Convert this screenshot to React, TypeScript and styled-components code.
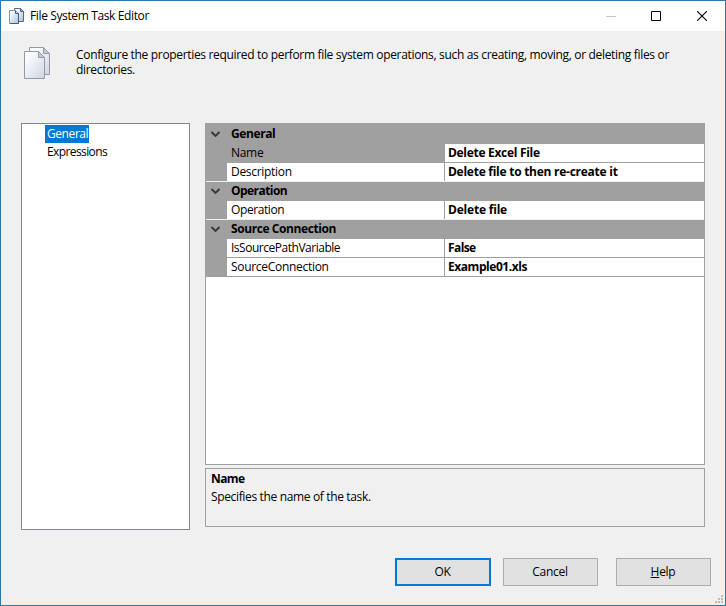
import React from "react";
import styled, { createGlobalStyle, css } from "styled-components";

const GlobalStyle = createGlobalStyle`
  * { box-sizing: border-box; }
  body { margin: 0; background: #f0f0f0; }
`;

const Window = styled.main`
  width: 726px;
  height: 606px;
  display: flex;
  flex-direction: column;
  position: relative;
  border: 1px solid #2878b4;
  background: #f0f0f0;
  color: #000;
  font: 12px/16px "Open Sans", "Noto Sans", sans-serif;
  cursor: default;
`;

const Text = styled.span<{ $spacing?: number }>`
  white-space: pre;
  letter-spacing: ${(p) => p.$spacing ?? -0.3}px;
`;

const TitleBar = styled.header`
  height: 30px;
  flex: none;
  display: flex;
  align-items: center;
  padding-left: 7px;
  background: #fff;
`;

const Title = styled.h1`
  flex: 1;
  margin: 0 0 0 5px;
  font-size: 12px;
  font-weight: 400;
  line-height: 16px;
`;

const CaptionButton = styled.button<{ $width: number }>`
  width: ${(p) => p.$width}px;
  height: 30px;
  padding: 0;
  border: 0;
  background: transparent;
  display: grid;
  place-items: center;
  svg { display: block; }
`;

const Intro = styled.section`
  height: 92px;
  flex: none;
  display: flex;
  padding: 15px 22px 0;
`;

const IntroText = styled.p`
  width: 610px;
  margin: 1px 0 0 25px;
  line-height: 15px;
  letter-spacing: -0.325px;
`;

const Body = styled.div`
  display: flex;
  gap: 15px;
  height: 407px;
  padding: 0 20px;
`;

const NavPanel = styled.nav`
  width: 169px;
  border: 1px solid #828790;
  background: #fff;
  padding: 1px 0 0 23px;
  display: flex;
  flex-direction: column;
  align-items: flex-start;
`;

const NavItem = styled.a<{ $selected?: boolean }>`
  height: 18px;
  line-height: 17px;
  padding: 0 1px 0 2px;
  color: ${(p) => (p.$selected ? "#fff" : "#000")};
  background: ${(p) => (p.$selected ? "#0078d7" : "transparent")};
`;

const Properties = styled.section`
  width: 500px;
  display: flex;
  flex-direction: column;
  gap: 3px;
`;

const Grid = styled.div`
  height: 342px;
  border: 1px solid #a0a0a0;
  background: #fff;
`;

const GroupHeader = styled.div<{ $first?: boolean }>`
  display: flex;
  height: ${(p) => (p.$first ? 20 : 19)}px;
  padding-top: ${(p) => (p.$first ? 1 : 0)}px;
  background: #a0a0a0;
  font-weight: 700;
  line-height: 18px;
`;

const Gutter = styled.div`
  width: 21px;
  flex: none;
  padding: 4px 0 0 4px;
  background: #a0a0a0;
  svg { display: block; }
`;

const PropertyRow = styled.div<{ $line: string }>`
  display: flex;
  height: 19px;
  line-height: 18px;
  border-bottom: 1px solid ${(p) => p.$line};
`;

const PropertyName = styled.div<{ $selected?: boolean }>`
  width: 218px;
  flex: none;
  padding-left: 4px;
  border-right: 1px solid #a0a0a0;
  ${(p) => p.$selected && css`background: #a0a0a0;`}
`;

const PropertyValue = styled.div`
  padding-left: 3px;
  font-weight: 700;
`;

const GroupTitle = styled.div`
  padding-left: 4px;
`;

const HelpPane = styled.div`
  height: 59px;
  border: 1px solid #a0a0a0;
  padding: 2px 5px;
  display: flex;
  flex-direction: column;
  gap: 2px;
`;

const HelpTitle = styled.div`
  font-weight: 700;
`;

const Actions = styled.footer`
  display: flex;
  margin-top: 28px;
  padding-left: 394px;
`;

const Button = styled.button<{ $primary?: boolean; $gap: number }>`
  width: ${(p) => (p.$primary ? 96 : 95)}px;
  height: 28px;
  margin: 0 ${(p) => p.$gap}px 0 0;
  padding: 0 1px 0 0;
  font: inherit;
  color: #000;
  background: #e1e1e1;
  border: ${(p) => (p.$primary ? "2px solid #0078d7" : "1px solid #adadad")};
`;

const Grip = styled.svg`
  position: absolute;
  right: 2px;
  bottom: 2px;
`;

const DocumentsSvg = styled.svg`
  display: block;
  flex: none;
`;

const SmallDocuments = () => (
  <DocumentsSvg width="17" height="17" viewBox="0 0 17 17">
    <defs>
      <linearGradient id="paperSmall" x1="0" y1="0" x2="1" y2="1">
        <stop offset="0.2" stopColor="#f8fafd" />
        <stop offset="1" stopColor="#a9bfdc" />
      </linearGradient>
    </defs>
    <g fill="url(#paperSmall)">
      <path d="M6.500.500H12.500L15.500 3.500V13.500H6.500Z" stroke="#526b88" />
      <path d="M12.500.500V3.500H15.500Z" fill="#8ba0bd" stroke="#526b88" />
      <path d="M1.500 2.500H7.500L10.500 5.500V15.500H1.500Z" stroke="#8496ad" />
      <path d="M7.500 2.500V5.500H10.500V15.500H2" fill="none" stroke="#435c7c" />
    </g>
  </DocumentsSvg>
);

const LargeDocuments = () => (
  <DocumentsSvg width="28" height="34" viewBox="0 0 28 34">
    <defs>
      <linearGradient id="paper" x1="0" y1="0" x2="1" y2="1">
        <stop offset="0.2" stopColor="#fafbfd" />
        <stop offset="1" stopColor="#cdd5e2" />
      </linearGradient>
    </defs>
    <g fill="url(#paper)" stroke="#9299a9">
      <path d="M6.500 1.500H20.500L26.500 7.500V28.500H6.500Z" />
      <path d="M20.500 1.500V7.500H26.500Z" fill="#c4c9d3" />
      <path d="M1.500 5.500H15.500L21.500 11.500V32.500H1.500Z" />
      <path d="M15.500 5.500V11.500H21.500Z" fill="#c4c9d3" />
    </g>
  </DocumentsSvg>
);

const Chevron = () => (
  <svg width="11" height="10" viewBox="0 0 11 10" fill="none" stroke="#383838" strokeWidth="1.9">
    <path d="M1.500 3L5.500 7L9.500 3" />
  </svg>
);

type Item = { name: string; value: string; ns?: number; vs?: number; selected?: boolean };
const groups: { title: string; ts?: number; items: Item[] }[] = [
  {
    title: "General",
    ts: -0.4,
    items: [
      { name: "Name", value: "Delete Excel File", selected: true },
      { name: "Description", value: "Delete file to then re-create it", vs: -0.26 },
    ],
  },
  {
    title: "Operation",
    ts: -0.55,
    items: [{ name: "Operation", value: "Delete file", ns: -0.4, vs: -0.2 }],
  },
  {
    title: "Source Connection",
    ts: -0.42,
    items: [
      { name: "IsSourcePathVariable", value: "False", ns: -0.48, vs: -0.6 },
      { name: "SourceConnection", value: "Example01.xls", vs: -0.45 },
    ],
  },
];

export default function App() {
  return (
    <>
      <GlobalStyle />
      <Window>
        <TitleBar>
          <SmallDocuments />
          <Title><Text $spacing={-0.37}>File System Task Editor</Text></Title>
          <CaptionButton $width={44} aria-label="Minimize">
            <svg width="10" height="10"><path d="M0 5.500H10" stroke="#c5c5c5" /></svg>
          </CaptionButton>
          <CaptionButton $width={46} aria-label="Maximize">
            <svg width="10" height="10"><path d="M.5.500H9.500V9.500H.5Z" fill="none" stroke="#000" /></svg>
          </CaptionButton>
          <CaptionButton $width={46} aria-label="Close">
            <svg width="10" height="10"><path d="M0 0L10 10M10 0L0 10" stroke="#000" strokeWidth="1.100" /></svg>
          </CaptionButton>
        </TitleBar>
        <Intro>
          <LargeDocuments />
          <IntroText>
            Configure the properties required to perform file system operations, such as creating, moving, or deleting files or directories.
          </IntroText>
        </Intro>
        <Body>
          <NavPanel>
            <NavItem $selected><Text $spacing={-0.42}>General</Text></NavItem>
            <NavItem><Text $spacing={-0.6}>Expressions</Text></NavItem>
          </NavPanel>
          <Properties>
            <Grid>
              {groups.map((g, gi) => (
                <React.Fragment key={g.title}>
                  <GroupHeader $first={gi === 0}>
                    <Gutter><Chevron /></Gutter>
                    <GroupTitle><Text $spacing={g.ts}>{g.title}</Text></GroupTitle>
                  </GroupHeader>
                  {g.items.map((it, i) => (
                    <PropertyRow
                      key={it.name}
                      $line={i === g.items.length - 1 && gi < groups.length - 1 ? "#f0f0f0" : "#a0a0a0"}
                    >
                      <Gutter />
                      <PropertyName $selected={it.selected}><Text $spacing={it.ns}>{it.name}</Text></PropertyName>
                      <PropertyValue><Text $spacing={it.vs}>{it.value}</Text></PropertyValue>
                    </PropertyRow>
                  ))}
                </React.Fragment>
              ))}
            </Grid>
            <HelpPane>
              <HelpTitle><Text $spacing={-0.6}>Name</Text></HelpTitle>
              <Text $spacing={-0.35}>Specifies the name of the task.</Text>
            </HelpPane>
          </Properties>
        </Body>
        <Actions>
          <Button $primary $gap={12}><Text>OK</Text></Button>
          <Button $gap={18}><Text>Cancel</Text></Button>
          <Button $gap={0}><Text><u>H</u>elp</Text></Button>
        </Actions>
        <Grip width="8" height="8" fill="#bcbcbc">
          <path d="M6 0h2v2h-2zM3 3h2v2h-2zM6 3h2v2h-2zM0 6h2v2h-2zM3 6h2v2h-2zM6 6h2v2h-2z" />
        </Grip>
      </Window>
    </>
  );
}
